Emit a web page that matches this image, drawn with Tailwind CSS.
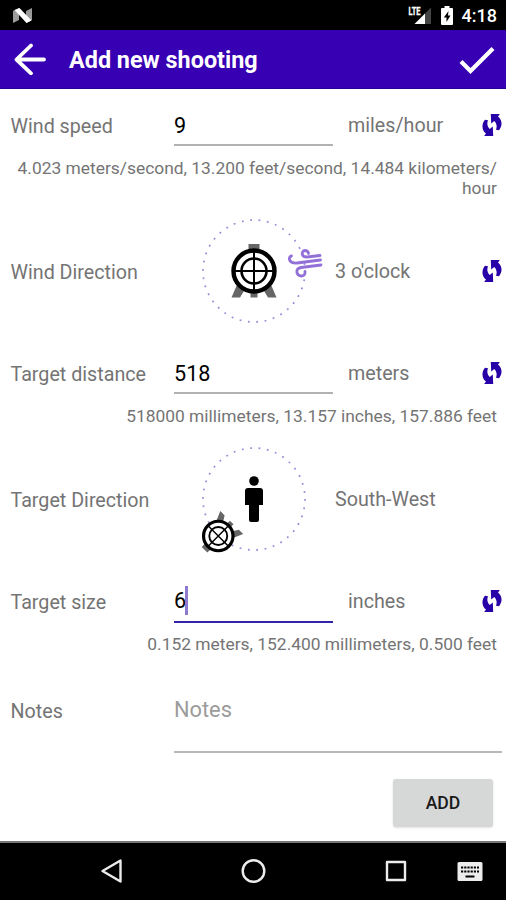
<!DOCTYPE html>
<html lang="en">
<head>
  <meta charset="UTF-8" />
  <meta name="viewport" content="width=device-width, initial-scale=1.0" />
  <title>Add new shooting</title>
  <script src="https://cdn.jsdelivr.net/npm/@tailwindcss/browser@4"></script>
</head>
<body class="bg-white font-[Roboto,sans-serif] text-[#747474]">

  <!-- Shared icons -->
  <svg class="hidden">
    <symbol id="sync" viewBox="0 0 20 24">
      <path id="sync-arrow" d="M8.800 1H17.800L16 3.400C20 6.500 21 12.500 17 17.200L14 16.800C15.200 13.500 14.800 10.800 12.300 8L9.200 10.600Z" />
      <use href="#sync-arrow" transform="rotate(180 10 12)" />
    </symbol>
    <symbol id="target" viewBox="0 0 48 56" overflow="visible">
      <g fill="#666">
        <path d="M18.500 1h11v6h-11zM20.500 49h7v5.500h-7zM1.500 54.500l6-14 8 5-5.500 9zM46.500 54.500l-6-14-8 5 5.500 9z" />
      </g>
      <g fill="none" stroke="#000">
        <circle cx="24" cy="28" r="20.500" stroke-width="4.400" fill="#fff" />
        <circle cx="24" cy="28" r="12.500" stroke-width="2.600" />
        <path d="M24 8v40M4 28h40" stroke-width="2" />
      </g>
    </symbol>
  </svg>

  <div class="flex h-[900px] w-[506px] flex-col overflow-hidden">

    <!-- Status bar -->
    <div class="flex h-[30px] shrink-0 items-center bg-black pl-[13px] pr-[9px] text-white">
      <svg class="h-[15px] w-5" viewBox="0 0 20 15">
        <path d="M0 3l6-3v12l-6 3zM13 3l6-3v12l-6 3z" fill="#9b9b9b" />
        <path d="M1.500 2L6.500 0l12 12.500-5 2.500z" fill="#fff" />
      </svg>
      <svg class="ml-auto h-5 w-6" viewBox="0 0 24 20">
        <path d="M23 2.500v16.500h-6V8.500z" fill="#444" />
        <path d="M17 8.500v10.500H6.500z" fill="#fff" />
        <text x="0.500" y="9.500" fill="#fff" stroke="#fff" stroke-width="0.300" font-size="10" font-weight="700" textLength="12" lengthAdjust="spacingAndGlyphs">LTE</text>
      </svg>
      <svg class="ml-[9px] h-[19px] w-3" viewBox="0 0 12 19">
        <path d="M3.500 0h5v2H11q1 0 1 1v15q0 1-1 1H1q-1 0-1-1V3q0-1 1-1h2.500z" fill="#fff" />
        <path d="M7.500 5L2.800 11.500h2.700V16l4-6.500H7z" fill="#000" />
      </svg>
      <span class="ml-[9px] mt-[1px] text-[18px] font-medium leading-none">4:18</span>
    </div>

    <!-- App bar -->
    <div class="flex h-[59px] shrink-0 items-center border-b border-[#2a009c] bg-[#3700b3] pl-[14px] pr-[11px] text-white">
      <svg class="h-8 w-8" viewBox="0 0 32 32" fill="none" stroke="currentColor" stroke-width="3.800" stroke-linecap="round" stroke-linejoin="round">
        <path d="M17 2.500L2.500 16.500L17 30.300M3 16.500h27" />
      </svg>
      <h1 class="ml-[23px] mt-[4px] text-[23.400px] font-bold leading-none">Add new shooting</h1>
      <svg class="ml-auto mt-0.5 h-7 w-9" viewBox="0 0 36 28" fill="none" stroke="currentColor" stroke-width="4.200">
        <path d="M2 15.500L11.500 25L34 2.500" />
      </svg>
    </div>

    <!-- Form -->
    <main class="flex flex-1 flex-col pt-[7px] text-[19.700px]">

      <div class="flex h-[58px] items-center pl-[10.500px] pr-1">
        <div class="w-[163.500px] pt-[3px]">Wind speed</div>
        <div class="flex h-[42px] w-[159px] items-center border-b-2 border-[#b2b2b2] pt-1 text-[21.600px] text-black">9</div>
        <div class="ml-[15px] pt-0.5">miles/hour</div>
        <svg class="ml-auto h-6 w-5 fill-[#2800a8]"><use href="#sync" /></svg>
      </div>
      <p class="mt-1 h-10 pl-[10px] pr-[9px] text-right text-[17.400px] leading-5">4.023 meters/second, 13.200 feet/second, 14.484 kilometers/<br />hour</p>

      <div class="mt-[20px] flex h-[106px] items-center pl-[10.500px] pr-1">
        <div class="w-[189.500px] pt-[3px]">Wind Direction</div>
        <svg class="h-[106px] w-[125px]" viewBox="0 0 125 106">
          <circle cx="54" cy="53" r="51" fill="none" stroke="#9a8ad8" stroke-width="1.700" stroke-dasharray="1.800 6.632" />
          <use href="#target" x="30" y="25" width="48" height="56" />
          <g fill="none" stroke="#9370d8" stroke-width="2.800" stroke-linecap="round">
            <path d="M120 37.500L107 39C101 39 101 33 105 32.500Q108.500 33 108.500 35.500" />
            <path d="M120.500 42L97 45C88 45.500 88 38.500 91.500 38" />
            <path d="M121 47L101 49.500C95 50.500 96 57.500 101 58Q105.500 58 105 53.500" />
          </g>
        </svg>
        <div class="ml-[10px] pt-0.5">3 o'clock</div>
        <svg class="ml-auto h-6 w-5 fill-[#2800a8]"><use href="#sync" /></svg>
      </div>

      <div class="mt-[20px] flex h-[58px] items-center pl-[10.500px] pr-1">
        <div class="w-[163.500px] pt-[3px]">Target distance</div>
        <div class="flex h-[42px] w-[159px] items-center border-b-2 border-[#b2b2b2] pt-1 text-[21.600px] text-black">518</div>
        <div class="ml-[15px] pt-0.5">meters</div>
        <svg class="ml-auto h-6 w-5 fill-[#2800a8]"><use href="#sync" /></svg>
      </div>
      <p class="mt-1 h-5 pr-[9px] text-right text-[17.400px] leading-5">518000 millimeters, 13.157 inches, 157.886 feet</p>

      <div class="mt-[20px] flex h-[106px] items-center pl-[10.500px] pr-1">
        <div class="w-[189.500px] pt-[3px]">Target Direction</div>
        <svg class="h-[106px] w-[125px] overflow-visible" viewBox="0 0 125 106">
          <circle cx="54" cy="53" r="51" fill="none" stroke="#9a8ad8" stroke-width="1.700" stroke-dasharray="1.800 6.632" />
          <circle cx="54" cy="35" r="4.800" />
          <path d="M48 42h12q3 0 3 3v14h-4v15q0 2-2 2h-6q-2 0-2-2V59h-4V45q0-3 3-3z" />
          <g transform="rotate(225 18.250 90)">
            <use href="#target" x="1" y="69.900" width="34.500" height="40.250" />
          </g>
        </svg>
        <div class="ml-[10px] pt-px">South-West</div>
      </div>

      <div class="mt-[20px] flex h-[58px] items-center pl-[10.500px] pr-1">
        <div class="w-[163.500px] pt-[3px]">Target size</div>
        <div class="flex h-[44px] w-[159px] items-center border-b-2 border-[#3024a8] text-[21.600px] text-black"><span class="pt-[3px]">6</span><span class="-ml-px h-[29px] w-[3px] bg-[#8e7bd0]"></span></div>
        <div class="ml-[15px] pt-px">inches</div>
        <svg class="ml-auto h-6 w-5 fill-[#2800a8]"><use href="#sync" /></svg>
      </div>
      <p class="mt-1 h-5 pr-[9px] text-right text-[17.400px] leading-5">0.152 meters, 152.400 millimeters, 0.500 feet</p>

      <div class="mt-[27px] flex h-[72px] pl-[10.500px] pr-1">
        <div class="w-[163.500px] pt-[16px]">Notes</div>
        <div class="flex-1 border-b-2 border-[#b8b8b8] pt-[13px] text-[21.800px] text-[#9b9b9b]">Notes</div>
      </div>

      <button class="ml-auto mr-[13px] mt-[26px] h-12 w-[100px] rounded-[3px] bg-[#d6d7d7] text-[17.600px] font-medium text-[#1a1a1a] shadow">ADD</button>
    </main>

    <!-- Navigation bar -->
    <div class="h-[59px] shrink-0 border-t-2 border-[#777] bg-black">
      <svg class="h-[57px] w-[506px]" viewBox="0 843 506 57" fill="none" stroke="#ececec" stroke-width="2.400" stroke-linejoin="round">
        <path d="M102.500 871L120.500 860.500V881.500Z" />
        <circle cx="253.500" cy="871" r="10.800" />
        <rect x="387" y="862" width="18" height="18" />
        <rect x="457.500" y="862" width="25" height="19" rx="1.500" fill="#ececec" stroke="none" />
        <path d="M461 867.500h18M461 871.500h18" stroke="#000" stroke-width="2" stroke-dasharray="2.200 1" />
        <path d="M465.500 876.500h9" stroke="#000" stroke-width="2" />
      </svg>
    </div>
  </div>
</body>
</html>
